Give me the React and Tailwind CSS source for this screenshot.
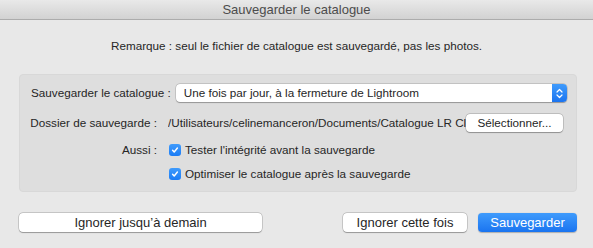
import React from "react";

const font = { fontFamily: '"Liberation Sans", Arial, sans-serif' };

const Check = () => (
  <span className="flex h-[12px] w-[12px] items-center justify-center rounded-[3px] bg-gradient-to-b from-[#3f9bfc] to-[#1b7cf5]">
    <svg width="8" height="8" viewBox="0 0 10 10" fill="none">
      <path d="M2 5.3l2 2.2L8 2.5" stroke="white" strokeWidth="1.8" strokeLinecap="round" strokeLinejoin="round" />
    </svg>
  </span>
);

export default function App() {
  return (
    <div className="w-[593px] h-[248px] bg-[#e8e8e8] text-[11.7px] text-[#262626] overflow-hidden" style={font}>
      {/* barre de titre */}
      <div className="h-[20px] border-b border-[#acacac] bg-gradient-to-b from-[#e9e9e9] to-[#d2d2d2] flex items-center justify-center text-[13px] text-[#4c4c4c]">
        Sauvegarder le catalogue
      </div>

      <div className="h-[52px] flex items-center justify-center pb-[1px]">
        Remarque : seul le fichier de catalogue est sauvegardé, pas les photos.
      </div>

      <div className="ml-[19px] mt-[2px] w-[558px] h-[118px] rounded-[4px] border border-[#d8d8d8] bg-[#dedede] pt-[9px]">
        <div className="flex items-center h-[18px] pl-[11px]">
          <span className="whitespace-nowrap">Sauvegarder le catalogue :</span>
          <div className="ml-[5px] flex h-[18px] flex-1 mr-[9px] rounded-[4px] bg-white shadow-[0_0_0_0.5px_rgba(0,0,0,0.2),0_0.5px_1px_rgba(0,0,0,0.25)]">
            <span className="flex-1 pl-[8px] leading-[18px] whitespace-nowrap">Une fois par jour, à la fermeture de Lightroom</span>
            <span className="flex w-[15px] items-center justify-center rounded-r-[4px] bg-gradient-to-b from-[#3f9bfc] to-[#1b74f0]">
              <svg width="7" height="11" viewBox="0 0 7 11" fill="none">
                <path d="M1 4l2.5-2.5L6 4M1 7l2.5 2.5L6 7" stroke="white" strokeWidth="1.2" strokeLinecap="round" strokeLinejoin="round" />
              </svg>
            </span>
          </div>
        </div>

        <div className="mt-[12px] flex items-center h-[18px]">
          <span className="w-[137px] text-right whitespace-nowrap">Dossier de sauvegarde :</span>
          <span className="ml-[11px] w-[298px] overflow-hidden whitespace-nowrap">/Utilisateurs/celinemanceron/Documents/Catalogue LR Classic</span>
          <button className="h-[18px] w-[97px] rounded-[4px] bg-white shadow-[0_0_0_0.5px_rgba(0,0,0,0.25),0_0.5px_1px_rgba(0,0,0,0.25)] leading-[18px]">
            Sélectionner...
          </button>
        </div>

        <div className="mt-[9px] flex items-center h-[18px]">
          <span className="w-[137px] text-right">Aussi :</span>
          <span className="ml-[12px] mr-[4px]"><Check /></span>
          <span>Tester l'intégrité avant la sauvegarde</span>
        </div>

        <div className="mt-[6px] flex items-center h-[18px]">
          <span className="w-[137px]"></span>
          <span className="ml-[12px] mr-[4px]"><Check /></span>
          <span>Optimiser le catalogue après la sauvegarde</span>
        </div>
      </div>

      <div className="mt-[21px] flex items-center pl-[19px] pr-[16px] text-[13px]">
        <button className="h-[19px] w-[243px] rounded-[4px] bg-white shadow-[0_0_0_0.5px_rgba(0,0,0,0.25),0_0.5px_1px_rgba(0,0,0,0.25)] leading-[19px]">
          Ignorer jusqu’à demain
        </button>
        <div className="flex-1" />
        <button className="h-[19px] w-[124px] rounded-[4px] bg-white shadow-[0_0_0_0.5px_rgba(0,0,0,0.25),0_0.5px_1px_rgba(0,0,0,0.25)] leading-[19px]">
          Ignorer cette fois
        </button>
        <button className="ml-[11px] h-[19px] w-[99px] rounded-[4px] bg-gradient-to-b from-[#3f9bfc] to-[#1a74f0] text-white leading-[19px] shadow-[0_0.5px_1px_rgba(0,0,0,0.25)]">
          Sauvegarder
        </button>
      </div>
    </div>
  );
}
